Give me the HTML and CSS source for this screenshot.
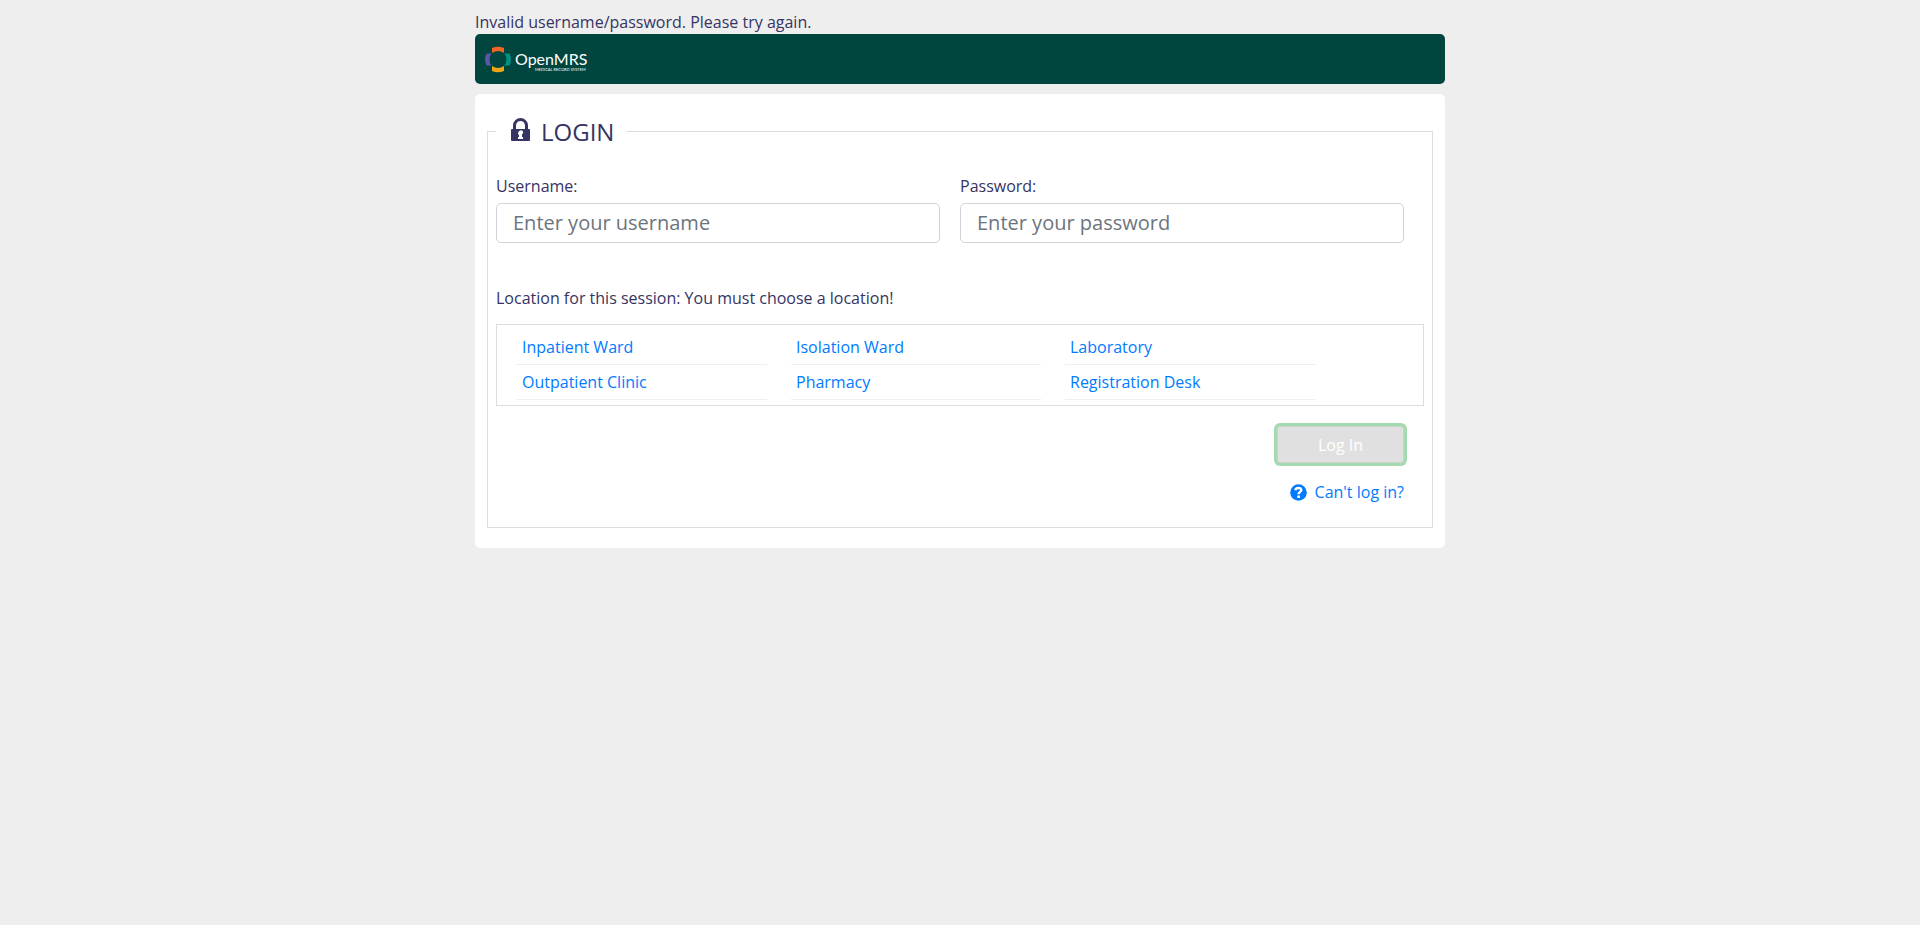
FILE: index.html
```html
<!DOCTYPE html>
<html lang="en">
<head>
<meta charset="utf-8">
<meta name="viewport" content="width=device-width, initial-scale=1">
<title>Login</title>
<link rel="stylesheet" href="styles.css">
</head>
<body>
<div class="page">
  <div class="message" role="alert">Invalid username/password. Please try again.</div>
  <header class="header">
    <a class="brand" href="#" aria-label="OpenMRS home">
      <svg class="brand-logo" viewBox="0 0 106 28" aria-hidden="true">
        <path fill="#f26522" d="M7 3Q13 .4 19 3v5q-6-4-12 0z"/>
        <path fill="#eea616" d="M7 26Q13 28.600 19 26v-5q-6 4-12 0z"/>
        <path fill="#5b57a6" d="M1.500 8.500Q-1.300 14.500 1.500 20.500h5q-4-6 0-12z"/>
        <path fill="#009384" d="M24.500 8.500Q27.300 14.500 24.500 20.500h-5q4-6 0-12z"/>
        <text class="logo-name" x="30" y="20">OpenMRS</text>
        <text class="logo-tag" x="50" y="26">MEDICAL RECORD SYSTEM</text>
      </svg>
    </a>
  </header>
  <main class="card">
    <form>
      <fieldset class="login">
        <legend class="legend">
          <span class="legend-inner">
            <svg class="lock" viewBox="0 0 19 23" aria-hidden="true">
              <path fill="#363463" fill-rule="evenodd" d="M2 11V7.500a7.500 7.500 0 0 1 15 0V11h1q1 0 1 1v10q0 1-1 1H1q-1 0-1-1V12q0-1 1-1zM5 11h9V7.500a4.500 4.500 0 0 0-9 0zM9.500 12.500a2 2 0 0 0-2 2h-.5v2h1V19H7v2h5v-2h-1v-2.800a2 2 0 0 0-1.500-3.700z"/>
            </svg>
            <span class="legend-text">LOGIN</span>
          </span>
        </legend>
        <div class="fields">
          <div class="field">
            <label for="username">Username:</label>
            <input id="username" type="text" placeholder="Enter your username">
          </div>
          <div class="field">
            <label for="password">Password:</label>
            <input id="password" type="password" placeholder="Enter your password">
          </div>
        </div>
        <p class="location-label" id="location-label">Location for this session: You must choose a location!</p>
        <ul class="locations" aria-labelledby="location-label">
          <li><a href="#">Inpatient Ward</a></li>
          <li><a href="#">Isolation Ward</a></li>
          <li><a href="#">Laboratory</a></li>
          <li><a href="#">Outpatient Clinic</a></li>
          <li><a href="#">Pharmacy</a></li>
          <li><a href="#">Registration Desk</a></li>
        </ul>
        <div class="actions">
          <button class="submit" type="submit" disabled>Log In</button>
          <a class="help" href="#">
            <svg class="help-icon" viewBox="0 0 17 17" aria-hidden="true">
              <circle cx="8.500" cy="8.500" r="8.300" fill="#007bff"/>
              <path fill="none" stroke="#fff" stroke-width="2.400" d="M5.200 6.300C6 3.300 11.400 3.200 11.300 6.200 11.200 8 8.600 7.900 8.600 10.300"/>
              <path fill="#fff" d="M7.300 11.500h2.600V14H7.300z"/>
            </svg>
            Can't log in?
          </a>
        </div>
      </fieldset>
    </form>
  </main>
</div>
</body>
</html>
```
FILE: styles.css
```css
* {
  box-sizing: border-box;
}

body {
  margin: 0;
  background: #eee;
  color: #363463;
  font-family: "Open Sans", "Liberation Sans", sans-serif;
  font-size: 16px;
  line-height: 24px;
}

a {
  color: #007bff;
  text-decoration: none;
}

.page {
  max-width: 970px;
  margin: 0 auto;
  padding-top: 10px;
}

.header {
  display: flex;
  padding: 11px 10px;
  background: #00463f;
  border-radius: 5px;
}

.brand {
  display: block;
}

.brand-logo {
  display: block;
  width: 106px;
  height: 28px;
}

.logo-name {
  fill: #fff;
  font-family: Lato, sans-serif;
  font-size: 16px;
}

.logo-tag {
  fill: #fff;
  font-family: Lato, sans-serif;
  font-size: 4px;
}

.card {
  margin-top: 10px;
  padding: 19px 12px 20px;
  background: #fff;
  border-radius: 5px;
}

.login {
  min-width: 0;
  margin: 0;
  padding: 0 8px 23px;
  border: 1px solid #ddd;
}

.legend {
  padding: 0 12px 0 15px;
  font-size: 24px;
  line-height: 36px;
}

.legend-inner {
  display: flex;
  align-items: center;
  gap: 11px;
}

.legend-text {
  padding-top: 1px;
  line-height: 35px;
}

.lock {
  width: 19px;
  height: 23px;
  margin-bottom: 4px;
}

.fields {
  display: flex;
  gap: 20px;
  padding: 25px 20px 0 0;
}

.field {
  flex: 1;
  min-width: 0;
}

.field label {
  display: block;
  margin-bottom: 5px;
}

.field input {
  display: block;
  width: 100%;
  height: 40px;
  padding: 4px 16px 6px;
  border: 1px solid #ced4da;
  border-radius: 5px;
  background: #fff;
  color: #495057;
  font: inherit;
  font-size: 20px;
}

.field input::placeholder {
  color: #6c757d;
  opacity: 1;
}

.location-label {
  margin: 43px 0 14px;
}

.locations {
  display: grid;
  grid-template-columns: repeat(auto-fill, 250px);
  column-gap: 24px;
  margin: 0;
  padding: 5px 20px;
  border: 1px solid #ddd;
  list-style: none;
}

.locations li {
  padding: 5px;
  border-bottom: 1px solid #eee;
}

.locations a {
  display: block;
}

.actions {
  display: flex;
  flex-direction: column;
  align-items: flex-end;
  gap: 17px;
  padding: 20px 20px 0 0;
}

.submit {
  width: 127px;
  height: 37px;
  border: 1px solid #ccd2cd;
  border-radius: 3px;
  background: #e0e0e0;
  box-shadow: 0 0 0 3px #a3dab0;
  color: #fff;
  font: inherit;
}

.help {
  display: flex;
  align-items: center;
  gap: 8px;
}

.help-icon {
  width: 17px;
  height: 17px;
}
```
